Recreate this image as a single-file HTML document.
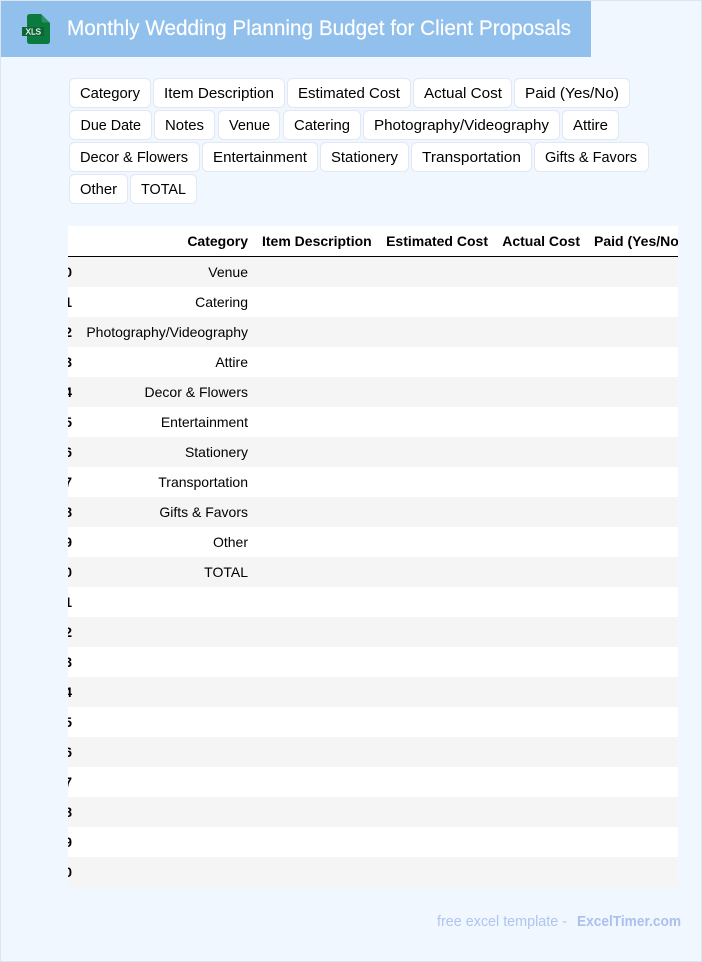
<!DOCTYPE html>
<html lang="en"><head><meta charset="utf-8"><title>Monthly Wedding Planning Budget for Client Proposals</title>
<style>
html,body{margin:0;padding:0;width:702px;height:962px;overflow:hidden;background:#f0f7ff}
body{position:relative;font-family:"Liberation Sans",sans-serif}
#frame{position:absolute;left:0;top:0;width:700px;height:960px;border:1px solid #dbe5f0}
#head{position:absolute;left:1px;top:1px;width:590px;height:56px;background:#92c0ec}
#wrap{position:absolute;left:68px;top:226px;width:610px;height:661px;overflow:hidden}
table{position:absolute;left:-69px;top:0;border-collapse:separate;border-spacing:0;table-layout:fixed;width:690px;font-size:14px;color:#000}
th,td{padding:0 7px;text-align:right;white-space:nowrap;height:30px;box-sizing:border-box}
thead tr{background:#fff}
thead th{height:31px;border-bottom:1px solid #000}
tbody tr:nth-child(odd){background:#f5f5f5}
tbody tr:nth-child(even){background:#fff}
svg{position:absolute;left:0;top:0}
</style></head><body>
<div id="frame"></div>
<div id="head"></div>
<div id="wrap"><table>
<colgroup><col style="width:80px"><col style="width:176px"><col style="width:122px"><col style="width:118px"><col style="width:92px"><col style="width:102px"></colgroup>
<thead><tr><th></th><th>Category</th><th>Item Description</th><th>Estimated Cost</th><th>Actual Cost</th><th>Paid (Yes/No)</th></tr></thead>
<tbody>
<tr><th>0</th><td>Venue</td><td></td><td></td><td></td><td></td></tr>
<tr><th>1</th><td>Catering</td><td></td><td></td><td></td><td></td></tr>
<tr><th>2</th><td>Photography/Videography</td><td></td><td></td><td></td><td></td></tr>
<tr><th>3</th><td>Attire</td><td></td><td></td><td></td><td></td></tr>
<tr><th>4</th><td>Decor &amp; Flowers</td><td></td><td></td><td></td><td></td></tr>
<tr><th>5</th><td>Entertainment</td><td></td><td></td><td></td><td></td></tr>
<tr><th>6</th><td>Stationery</td><td></td><td></td><td></td><td></td></tr>
<tr><th>7</th><td>Transportation</td><td></td><td></td><td></td><td></td></tr>
<tr><th>8</th><td>Gifts &amp; Favors</td><td></td><td></td><td></td><td></td></tr>
<tr><th>9</th><td>Other</td><td></td><td></td><td></td><td></td></tr>
<tr><th>10</th><td>TOTAL</td><td></td><td></td><td></td><td></td></tr>
<tr><th>11</th><td></td><td></td><td></td><td></td><td></td></tr>
<tr><th>12</th><td></td><td></td><td></td><td></td><td></td></tr>
<tr><th>13</th><td></td><td></td><td></td><td></td><td></td></tr>
<tr><th>14</th><td></td><td></td><td></td><td></td><td></td></tr>
<tr><th>15</th><td></td><td></td><td></td><td></td><td></td></tr>
<tr><th>16</th><td></td><td></td><td></td><td></td><td></td></tr>
<tr><th>17</th><td></td><td></td><td></td><td></td><td></td></tr>
<tr><th>18</th><td></td><td></td><td></td><td></td><td></td></tr>
<tr><th>19</th><td></td><td></td><td></td><td></td><td></td></tr>
<tr><th>20</th><td></td><td></td><td></td><td></td><td></td></tr>
</tbody></table></div>
<svg width="702" height="962" viewBox="0 0 702 962" font-family="'Liberation Sans',sans-serif">
<path d="M30 14H41L50 23V41Q50 44 47 44H30Q27 44 27 41V17Q27 14 30 14Z" fill="#0a7a3f"/>
<path d="M41.5 15L49 22.5H44Q41.5 22.5 41.5 20Z" fill="#2f9160"/>
<rect x="22" y="27" width="22" height="9" fill="#0b6536"/>
<text x="25.500" y="34.500" font-size="8" fill="#fff" stroke="#fff" stroke-width=".2" textLength="15.500" lengthAdjust="spacingAndGlyphs">XLS</text>
<text x="67" y="35" font-size="21.500" fill="#fff" stroke="#fff" stroke-width=".15" textLength="504" lengthAdjust="spacingAndGlyphs">Monthly Wedding Planning Budget for Client Proposals</text>
<g fill="#fff" stroke="#e0e8f4">
<rect x="69.500" y="78.500" width="81" height="29" rx="5"/><rect x="153.500" y="78.500" width="131" height="29" rx="5"/><rect x="287.500" y="78.500" width="123" height="29" rx="5"/><rect x="413.500" y="78.500" width="98" height="29" rx="5"/><rect x="514.500" y="78.500" width="115" height="29" rx="5"/>
<rect x="69.500" y="110.500" width="82" height="29" rx="5"/><rect x="154.500" y="110.500" width="60" height="29" rx="5"/><rect x="218.500" y="110.500" width="61" height="29" rx="5"/><rect x="283.500" y="110.500" width="77" height="29" rx="5"/><rect x="363.500" y="110.500" width="196" height="29" rx="5"/><rect x="562.500" y="110.500" width="56" height="29" rx="5"/>
<rect x="69.500" y="142.500" width="130" height="29" rx="5"/><rect x="202.500" y="142.500" width="115" height="29" rx="5"/><rect x="320.500" y="142.500" width="88" height="29" rx="5"/><rect x="411.500" y="142.500" width="120" height="29" rx="5"/><rect x="534.500" y="142.500" width="114" height="29" rx="5"/>
<rect x="69.500" y="174.500" width="58" height="29" rx="5"/><rect x="130.500" y="174.500" width="66" height="29" rx="5"/>
</g>
<g font-size="15" fill="#000">
<text x="80" y="98" textLength="60" lengthAdjust="spacingAndGlyphs">Category</text>
<text x="164" y="98" textLength="110" lengthAdjust="spacingAndGlyphs">Item Description</text>
<text x="298" y="98" textLength="102" lengthAdjust="spacingAndGlyphs">Estimated Cost</text>
<text x="424" y="98" textLength="78" lengthAdjust="spacingAndGlyphs">Actual Cost</text>
<text x="525" y="98" textLength="94" lengthAdjust="spacingAndGlyphs">Paid (Yes/No)</text>
<text x="80.500" y="130" textLength="60.500" lengthAdjust="spacingAndGlyphs">Due Date</text>
<text x="165" y="130" textLength="39" lengthAdjust="spacingAndGlyphs">Notes</text>
<text x="229" y="130" textLength="41" lengthAdjust="spacingAndGlyphs">Venue</text>
<text x="294" y="130" textLength="56" lengthAdjust="spacingAndGlyphs">Catering</text>
<text x="374" y="130" textLength="175" lengthAdjust="spacingAndGlyphs">Photography/Videography</text>
<text x="573" y="130" textLength="35" lengthAdjust="spacingAndGlyphs">Attire</text>
<text x="80" y="162" textLength="108" lengthAdjust="spacingAndGlyphs">Decor &amp; Flowers</text>
<text x="213" y="162" textLength="94" lengthAdjust="spacingAndGlyphs">Entertainment</text>
<text x="331" y="162" textLength="67" lengthAdjust="spacingAndGlyphs">Stationery</text>
<text x="422" y="162" textLength="99" lengthAdjust="spacingAndGlyphs">Transportation</text>
<text x="545" y="162" textLength="92" lengthAdjust="spacingAndGlyphs">Gifts &amp; Favors</text>
<text x="80" y="194" textLength="37" lengthAdjust="spacingAndGlyphs">Other</text>
<text x="141" y="194" textLength="45" lengthAdjust="spacingAndGlyphs">TOTAL</text>
</g>
<text x="437" y="926" font-size="14.500" fill="#b0c4f0" textLength="130" lengthAdjust="spacingAndGlyphs">free excel template -</text>
<text x="577" y="926" font-size="14.500" font-weight="bold" fill="#abc0f0" textLength="104" lengthAdjust="spacingAndGlyphs">ExcelTimer.com</text>
</svg>
</body></html>
